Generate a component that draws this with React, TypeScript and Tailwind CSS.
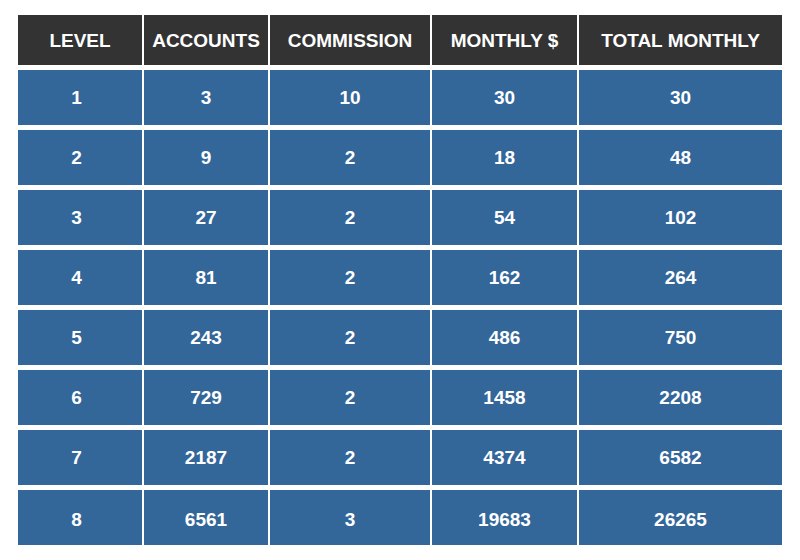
import React from 'react';
import clsx from 'clsx';

const headers = ['LEVEL', 'ACCOUNTS', 'COMMISSION', 'MONTHLY $', 'TOTAL MONTHLY'];

const rows: number[][] = [
  [1, 3, 10, 30, 30],
  [2, 9, 2, 18, 48],
  [3, 27, 2, 54, 102],
  [4, 81, 2, 162, 264],
  [5, 243, 2, 486, 750],
  [6, 729, 2, 1458, 2208],
  [7, 2187, 2, 4374, 6582],
  [8, 6561, 3, 19683, 26265],
];

const App: React.FC = () => {
  return (
    <div
      className="w-[800px] h-[560px] bg-white pl-[18px] pt-[15px]"
      style={{ fontFamily: '"Liberation Sans", Arial, sans-serif' }}
    >
      <div className="grid grid-cols-[124px_124px_160px_145px_203px] gap-x-[2px] gap-y-[5px] w-fit">
        {headers.map((h) => (
          <div
            key={h}
            className="h-[50px] pt-[2px] bg-[#333333] text-white font-bold text-[19px] flex items-center justify-center"
          >
            {h}
          </div>
        ))}
        {rows.map((row, i) =>
          row.map((cell, j) => (
            <div
              key={`${i}-${j}`}
              className={clsx(
                'h-[55px] bg-[#336699] text-white font-bold text-[19px] flex items-center justify-center',
                i === rows.length - 1 ? 'pt-[6px]' : 'pt-[2px]',
                j === 0 && 'pr-[7px]'
              )}
            >
              {cell}
            </div>
          ))
        )}
      </div>
    </div>
  );
};

export default App;
